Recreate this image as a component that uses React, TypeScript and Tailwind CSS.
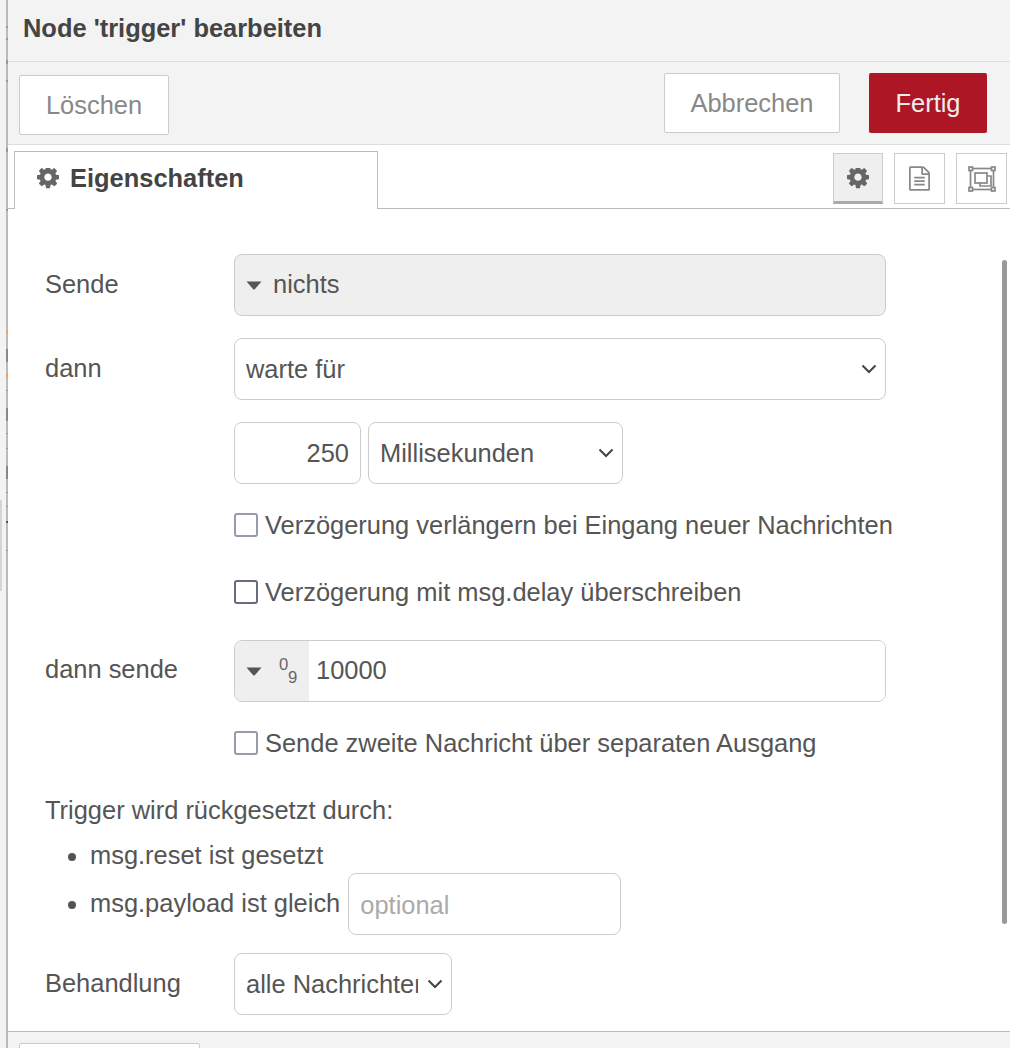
import React from "react";

const GEAR =
  "M1024 640q0-106-75-181t-181-75-181 75-75 181 75 181 181 75 181-75 75-181zm512-109v222q0 12-8 23t-20 13l-185 28q-19 54-39 91 35 50 107 138 10 12 10 25t-9 23q-27 37-99 108t-94 71q-12 0-26-9l-138-108q-44 23-91 38-16 136-29 186-7 28-36 28h-222q-14 0-24.5-8.5t-11.5-21.5l-28-184q-49-16-90-37l-141 107q-10 9-25 9-14 0-25-11-126-114-165-168-7-10-7-23 0-12 8-23 15-21 51-66.5t54-70.5q-27-50-41-99l-183-27q-13-2-21-12.5t-8-23.5v-222q0-12 8-23t19-13l186-28q14-46 39-92-40-57-107-138-10-12-10-24 0-10 9-23 26-36 98.5-107.5t94.5-71.5q13 0 26 10l138 107q44-23 91-38 16-136 29-186 7-28 36-28h222q14 0 24.5 8.5t11.5 21.5l28 184q49 16 90 37l142-107q9-9 24-9 13 0 25 10 129 119 165 170 7 8 7 22 0 12-8 23-15 21-51 66.5t-54 70.5q26 50 41 98l183 28q13 2 21 12.5t8 23.5z";
const FILE =
  "M1468 380q28 28 48 76t20 88v1152q0 40-28 68t-68 28h-1344q-40 0-68-28t-28-68v-1600q0-40 28-68t68-28h896q40 0 88 20t76 48zm-444-244v376h376q-10-29-22-41l-313-313q-12-12-41-22zm384 1528v-1024h-416q-40 0-68-28t-28-68v-416h-768v1536h1280zm-1024-864q0-14 9-23t23-9h704q14 0 23 9t9 23v64q0 14-9 23t-23 9h-704q-14 0-23-9t-9-23v-64zm736 224q14 0 23 9t9 23v64q0 14-9 23t-23 9h-704q-14 0-23-9t-9-23v-64q0-14 9-23t23-9h704zm0 256q14 0 23 9t9 23v64q0 14-9 23t-23 9h-704q-14 0-23-9t-9-23v-64q0-14 9-23t23-9h704z";

const Gear = ({ className }: { className: string }) => (
  <svg viewBox="0 0 1536 1536" className={className} fill="currentColor">
    <path d={GEAR} />
  </svg>
);

const Chevron = () => (
  <svg viewBox="0 0 16 10" className="absolute right-[9px] top-1/2 -mt-[5px] w-[16px] h-[10px] pointer-events-none" fill="none" stroke="#444" strokeWidth="2">
    <path d="M1.5 1.5 L8 8 L14.5 1.5" />
  </svg>
);

const Caret = () => (
  <svg viewBox="0 0 16 9" className="w-[16px] h-[9px] shrink-0" fill="#555">
    <path d="M0.5 0.5 H15.5 L9 8 Q8 9 7 8 Z" />
  </svg>
);

const Select = ({ className, value }: { className: string; value: string }) => (
  <div className={`relative h-[62px] ${className}`}>
    <select
      defaultValue={value}
      className="appearance-none w-full h-full border border-[#ccc] rounded-[8px] bg-white pl-[11px] pr-[33px] text-[#555] text-[25.45px] outline-none"
    >
      <option>{value}</option>
    </select>
    <Chevron />
  </div>
);

const Check = ({ label, dark, className }: { label: string; dark?: boolean; className: string }) => (
  <label className={`flex items-center h-[24px] ml-[189px] gap-[7px] whitespace-nowrap ${className}`}>
    <input
      type="checkbox"
      className={`appearance-none w-[24px] h-[24px] shrink-0 bg-white rounded-[3px] border-[2px] ${dark ? "border-[#6b6b7b]" : "border-[#9a9aac]"}`}
    />
    <span>{label}</span>
  </label>
);

const IconBox = ({ children, active }: { children: React.ReactNode; active?: boolean }) => (
  <div
    className={`flex items-center justify-center h-[51px] border border-[#ccc] ${
      active ? "w-[50px] pt-[2px] bg-[#efefef] border-b-[3px] border-b-[#aaa] text-[#666]" : "w-[51px] bg-white text-[#888]"
    }`}
  >
    {children}
  </div>
);

const Label = ({ children, up }: { children: React.ReactNode; up?: boolean }) => (
  <div className={`w-[189px] shrink-0 ${up ? "-mt-[3px]" : "-mt-[1px]"}`}>{children}</div>
);

const ticks: [number, number, string][] = [
  [26, 2, "#999"],
  [38, 2, "#999"],
  [60, 4, "#999"],
  [80, 2, "#999"],
  [148, 4, "#999"],
  [209, 2, "#999"],
  [330, 3, "#f0a050"],
  [349, 13, "#888"],
  [374, 3, "#f0a050"],
  [390, 1, "#999"],
  [408, 13, "#888"],
  [433, 1, "#999"],
  [448, 1, "#999"],
  [466, 13, "#888"],
  [492, 1, "#999"],
  [506, 1, "#999"],
  [521, 2, "#555"],
  [550, 1, "#999"],
];

export default function App() {
  return (
    <div className="w-[1010px] h-[1048px] overflow-hidden flex bg-[#f3f3f3] font-['Liberation_Sans',Arial,sans-serif] text-[25.45px] text-[#555]">
      <div className="w-[6px] shrink-0 bg-[#f3f3f3] relative">
        <div className="absolute left-0 top-[500px] w-[2px] h-[91px] bg-[#d5d5d5]" />
      </div>
      <div className="w-[2px] shrink-0 bg-[#bbb] relative">
        {ticks.map(([y, h, c]) => (
          <div key={y} className="absolute left-0 w-full" style={{ top: y, height: h, background: c }} />
        ))}
      </div>
      <div className="flex-1 min-w-0 flex flex-col h-full bg-white">
        <div className="h-[62px] shrink-0 bg-[#f3f3f3] border-b border-[#ddd] pl-[15px] flex items-center pb-[4px] font-bold text-[#444]">
          Node 'trigger' bearbeiten
        </div>
        <div className="h-[83px] shrink-0 bg-[#f3f3f3] border-b border-[#ddd] pl-[11px] pr-[23px] flex">
          <button className="mt-[13px] w-[150px] h-[60px] bg-white border border-[#ccc] rounded-[2px] text-[#888]">Löschen</button>
          <button className="ml-auto mt-[11px] w-[176px] h-[60px] bg-white border border-[#ccc] rounded-[2px] text-[#888]">Abbrechen</button>
          <button className="ml-[29px] mt-[11px] w-[118px] h-[60px] bg-[#ad1625] rounded-[2px] text-[#eee]">Fertig</button>
        </div>
        <div className="h-[64px] shrink-0 border-b border-[#bbb] relative flex justify-end pr-[3px] pt-[8px] gap-[11px]">
          <div className="absolute left-[6px] top-[6px] w-[364px] h-[58px] bg-white border border-b-0 border-[#bbb] flex items-center pl-[22px] gap-[11px] font-bold text-[#444]">
            <Gear className="text-[#666] w-[22px] h-[22px] mb-[4px]" />
            <span className="-mt-[5px]">Eigenschaften</span>
          </div>
          <IconBox active>
            <Gear className="w-[22px] h-[22px]" />
          </IconBox>
          <IconBox>
            <svg viewBox="0 0 1536 1792" className="w-[21px] h-[25px]" fill="currentColor">
              <path d={FILE} />
            </svg>
          </IconBox>
          <IconBox>
            <svg viewBox="0 0 28 26" className="w-[28px] h-[26px]" fill="none" stroke="#888" strokeWidth="1.7">
              <rect x="2.5" y="2.5" width="23" height="21" />
              <rect x="7" y="7" width="12" height="10" fill="white" />
              <path d="M19 10 H23 V20 H12 V17" />
              <g fill="white">
                <rect x="1" y="1" width="3.5" height="3.5" />
                <rect x="23.5" y="1" width="3.5" height="3.5" />
                <rect x="1" y="21.5" width="3.5" height="3.5" />
                <rect x="23.5" y="21.5" width="3.5" height="3.5" />
              </g>
            </svg>
          </IconBox>
        </div>
        <div className="flex-1 min-h-0 relative pl-[37px] pt-[45px]">
          <div className="absolute right-[3px] top-[51px] w-[5px] h-[664px] rounded-[3px] bg-[#999]" />
          <div className="flex items-center h-[62px]">
            <Label>Sende</Label>
            <div className="w-[652px] h-full bg-[#efefef] border border-[#ccc] rounded-[8px] flex items-center pl-[11px] gap-[11px]">
              <Caret />
              <span className="-mt-[2px]">nichts</span>
            </div>
          </div>
          <div className="flex items-center h-[62px] mt-[22px]">
            <Label>dann</Label>
            <Select className="w-[652px]" value="warte für" />
          </div>
          <div className="flex items-center h-[62px] mt-[22px] ml-[189px] gap-[7px]">
            <input
              readOnly
              value="250"
              className="w-[127px] h-full border border-[#ccc] rounded-[8px] bg-white text-right pr-[11px] text-[#555] outline-none"
            />
            <Select className="w-[255px]" value="Millisekunden" />
          </div>
          <Check className="mt-[29px]" label="Verzögerung verlängern bei Eingang neuer Nachrichten" />
          <Check className="mt-[43px]" dark label="Verzögerung mit msg.delay überschreiben" />
          <div className="flex items-center h-[62px] mt-[36px]">
            <Label up>dann sende</Label>
            <div className="w-[652px] h-full border border-[#ccc] rounded-[8px] flex overflow-hidden">
              <div className="w-[74px] shrink-0 bg-[#efefef] flex items-center pl-[11px] gap-[17px]">
                <Caret />
                <div className="relative text-[16.7px] leading-none w-[20px] h-[30px] text-[#666]">
                  <span className="absolute left-0 top-[1px]">0</span>
                  <span className="absolute left-[9px] top-[14px]">9</span>
                </div>
              </div>
              <input readOnly value="10000" className="flex-1 min-w-0 pl-[7px] pb-[2px] bg-white text-[#555] outline-none" />
            </div>
          </div>
          <Check className="mt-[29px]" label="Sende zweite Nachricht über separaten Ausgang" />
          <div className="mt-[42px] h-[27px] leading-[27px]">Trigger wird rückgesetzt durch:</div>
          <ul className="list-disc pl-[45px] marker:text-[#555]">
            <li className="mt-[18px] h-[27px] leading-[27px]">msg.reset ist gesetzt</li>
            <li className="mt-[4px]">
              <div className="flex items-center h-[62px]">
                <span className="-mt-[2px]">msg.payload ist gleich</span>
                <input
                  readOnly
                  placeholder="optional"
                  className="ml-[8px] w-[273px] h-full border border-[#ccc] rounded-[8px] bg-white pl-[11px] pt-[2px] text-[#555] placeholder:text-[#aaa] outline-none"
                />
              </div>
            </li>
          </ul>
          <div className="flex items-center h-[62px] mt-[18px]">
            <Label>Behandlung</Label>
            <Select className="w-[218px]" value="alle Nachrichten" />
          </div>
        </div>
        <div className="h-[17px] shrink-0 bg-[#f3f3f3] border-t border-[#bbb] pl-[11px] pt-[11px]">
          <div className="w-[181px] h-[20px] bg-white border border-[#ccc] rounded-[2px]" />
        </div>
      </div>
    </div>
  );
}
